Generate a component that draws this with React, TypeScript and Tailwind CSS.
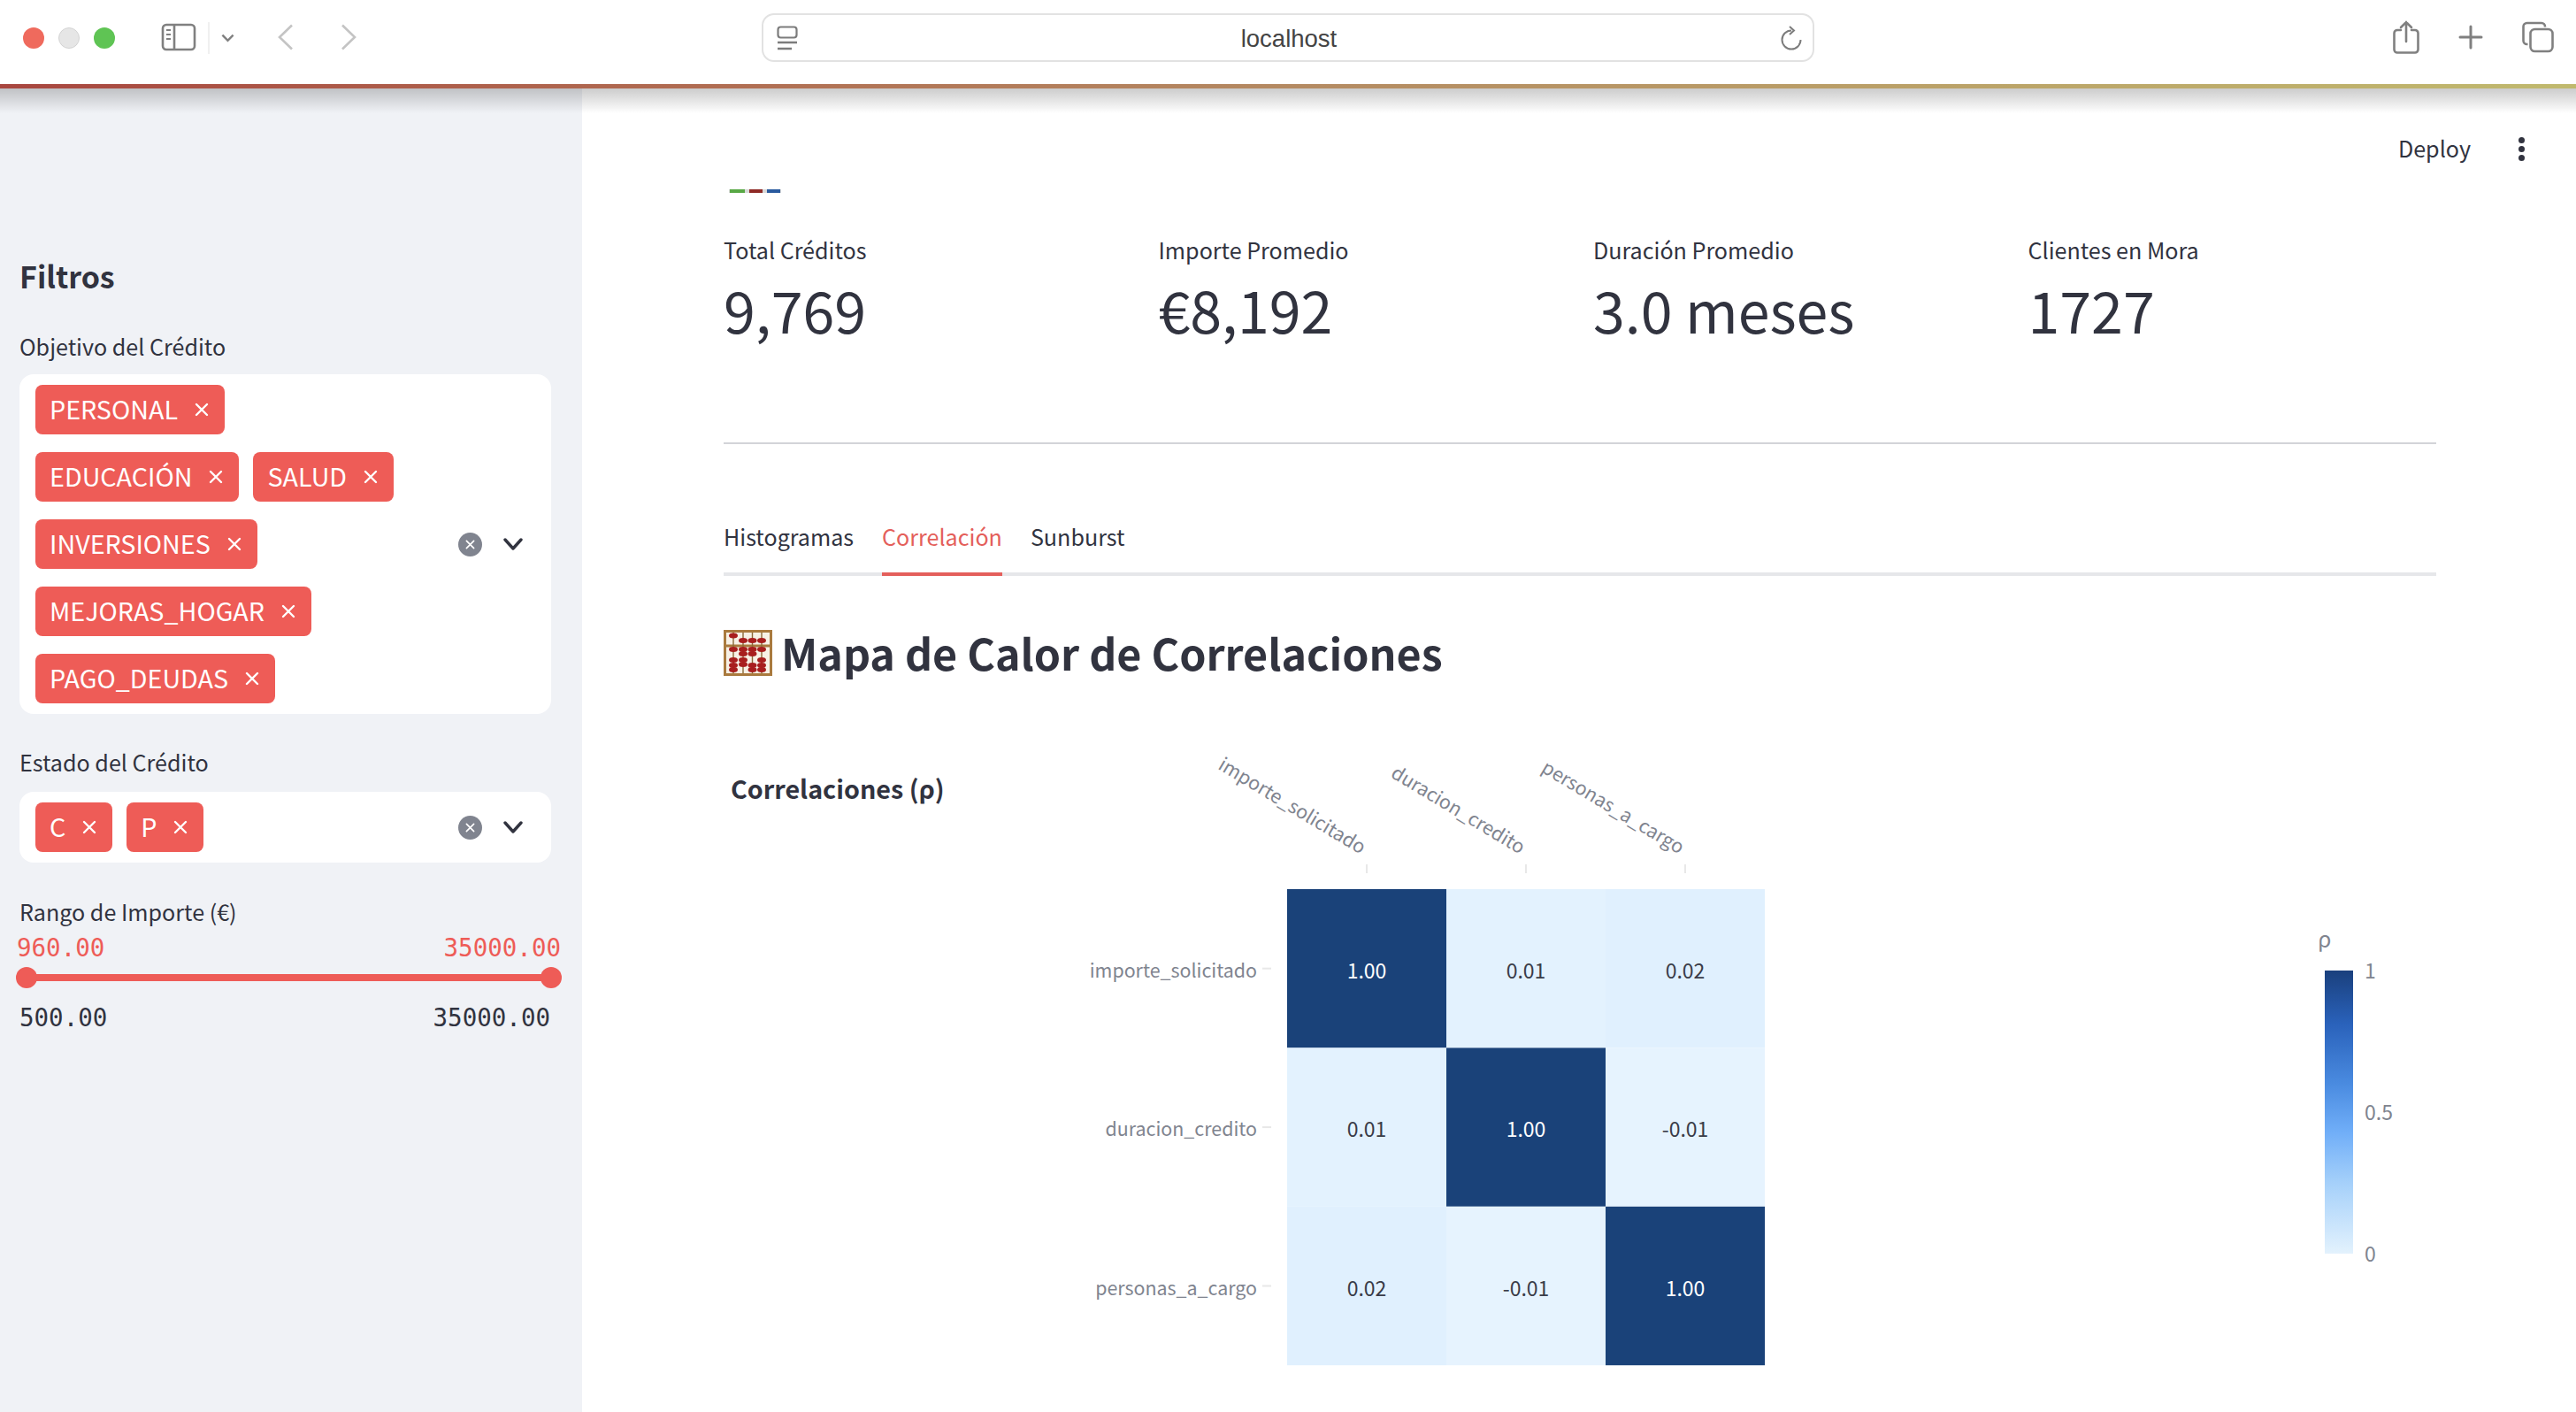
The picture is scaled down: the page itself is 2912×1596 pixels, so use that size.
import React from "react";

const SANS = "font-['Noto_Sans_CJK_SC','Noto_Sans',sans-serif]";

function XIcon({ className = "" }: { className?: string }) {
  return (
    <svg viewBox="0 0 16 16" className={className} fill="none" stroke="currentColor" strokeWidth="2.4" strokeLinecap="round">
      <path d="M2 2 L14 14 M14 2 L2 14" />
    </svg>
  );
}

function Tag({ label }: { label: string }) {
  return (
    <div className="flex h-[56px] items-center rounded-lg bg-[#ee5c57] pl-4 pr-[18px] text-[28.7px] leading-[54px] text-white">
      <span className="-mt-[2px]">{label}</span>
      <XIcon className="ml-[19px] h-4 w-4" />
    </div>
  );
}

function SelectControls() {
  return (
    <div className="flex shrink-0 items-center">
      <div className="flex h-[27px] w-[27px] items-center justify-center rounded-full bg-[#80848f] text-white">
        <XIcon className="h-[11px] w-[11px]" />
      </div>
      <svg viewBox="0 0 22 14" className="ml-[24px] h-[14px] w-[22px]" fill="none" stroke="#31333f" strokeWidth="3.4" strokeLinecap="round" strokeLinejoin="round">
        <path d="M2 2 L11 12 L20 2" />
      </svg>
    </div>
  );
}

function MultiSelect({ rows }: { rows: string[][] }) {
  return (
    <div className="mt-3 flex items-center justify-between rounded-2xl bg-white py-3 pl-[18px] pr-[32px]">
      <div className="flex flex-col gap-5">
        {rows.map((r) => (
          <div key={r[0]} className="flex gap-4">
            {r.map((t) => (
              <Tag key={t} label={t} />
            ))}
          </div>
        ))}
      </div>
      <SelectControls />
    </div>
  );
}

function Toolbar() {
  return (
    <div className="relative flex h-[95px] items-start bg-white">
      <div className="ml-[26px] mt-[31px] flex gap-4">
        <div className="h-6 w-6 rounded-full bg-[#ef6a5d]" />
        <div className="h-6 w-6 rounded-full border border-[#d4d4d4] bg-[#e6e6e6]" />
        <div className="h-6 w-6 rounded-full bg-[#5fc454]" />
      </div>
      <svg viewBox="0 0 40 32" className="ml-[52px] mt-[26px] h-8 w-10" fill="none" stroke="#808080" strokeWidth="2.6">
        <rect x="2" y="2" width="36" height="28" rx="4" />
        <path d="M15 2 V30" />
        <path d="M6 8 H11 M6 13 H11 M6 18 H11" strokeWidth="2" />
      </svg>
      <div className="ml-[13px] mt-[25px] h-[36px] w-[2px] bg-[#f0f0f0]" />
      <svg viewBox="0 0 16 10" className="ml-[13px] mt-[38px] h-[10px] w-[15px]" fill="none" stroke="#808080" strokeWidth="2.6">
        <path d="M1.5 1.5 L8 8 L14.5 1.5" />
      </svg>
      <svg viewBox="0 0 18 30" className="ml-[49px] mt-[27px] h-[30px] w-[18px]" fill="none" stroke="#c4c4c4" strokeWidth="2.6">
        <path d="M16 1.5 L2 15 L16 28.5" />
      </svg>
      <svg viewBox="0 0 18 30" className="ml-[53px] mt-[27px] h-[30px] w-[18px]" fill="none" stroke="#c4c4c4" strokeWidth="2.6">
        <path d="M2 1.5 L16 15 L2 28.5" />
      </svg>
      <div className="ml-[458px] mt-[15px] flex h-[55px] w-[1190px] items-center justify-between rounded-[14px] border-2 border-[#e2e2e2] pl-[15px] pr-[11px]">
        <svg viewBox="0 0 24 28" className="h-7 w-6" fill="none" stroke="#7c7c7c" strokeWidth="2.2">
          <rect x="1.5" y="1.5" width="21" height="12" rx="3" />
          <path d="M1 19 H23 M1 26 H17" strokeWidth="2.4" />
        </svg>
        <span className="mt-[2px] font-['Liberation_Sans',sans-serif] text-[27.5px] leading-none text-[#444]">localhost</span>
        <svg viewBox="0 0 26 28" className="h-7 w-[26px]" fill="none" stroke="#7c7c7c" strokeWidth="2">
          <path d="M13 5.5 A10.5 10.5 0 1 0 23.5 16" />
          <path d="M11 1 L16 5.5 L11 10" />
        </svg>
      </div>
      <svg viewBox="0 0 30 38" className="ml-auto mt-[23px] h-[38px] w-[30px]" fill="none" stroke="#808080" strokeWidth="2.6" strokeLinecap="round">
        <path d="M9 11 H5 a3.5 3.5 0 0 0 -3.5 3.5 V33 a3.5 3.5 0 0 0 3.5 3.5 H25 a3.5 3.5 0 0 0 3.5 -3.5 V14.5 a3.5 3.5 0 0 0 -3.5 -3.5 H21" />
        <path d="M15 24 V2 M9 8 L15 2 L21 8" />
      </svg>
      <svg viewBox="0 0 28 28" className="ml-[44px] mt-[28px] h-7 w-7" fill="none" stroke="#808080" strokeWidth="3" strokeLinecap="round">
        <path d="M14 2 V26 M2 14 H26" />
      </svg>
      <svg viewBox="0 0 36 36" className="ml-[44px] mr-[25px] mt-[24px] h-9 w-9" fill="none" stroke="#808080" strokeWidth="2.6">
        <rect x="9.5" y="9" width="25" height="25" rx="5" />
        <path d="M6.5 26 H5.5 A4 4 0 0 1 1.5 22 V6 A4 4 0 0 1 5.5 2 H22 A4 4 0 0 1 26 6 V6.5" />
      </svg>
    </div>
  );
}

function Sidebar() {
  return (
    <aside className="w-[658px] shrink-0 bg-[#f0f2f6] pl-[22px] pr-[35px] pt-[190px]">
      <h2 className="text-[34px] font-semibold leading-[44px]">Filtros</h2>
      <div className="mt-[37px] text-[25.1px] leading-[40px]">Objetivo del Crédito</div>
      <MultiSelect
        rows={[
          ["PERSONAL"],
          ["EDUCACIÓN", "SALUD"],
          ["INVERSIONES"],
          ["MEJORAS_HOGAR"],
          ["PAGO_DEUDAS"],
        ]}
      />
      <div className="mt-[34px] text-[25.1px] leading-[40px]">Estado del Crédito</div>
      <div className="pt-[2px]">
        <MultiSelect rows={[["C", "P"]]} />
      </div>
      <div className="mt-[35px] text-[25.1px] leading-[40px]">Rango de Importe (€)</div>
      <div className="-ml-[3px] -mr-[11px] mt-[3px] flex justify-between font-['DejaVu_Sans_Mono',monospace] text-[27.5px] leading-[36px] text-[#ee5c57]">
        <span>960.00</span>
        <span>35000.00</span>
      </div>
      <div className="relative ml-2 mt-3 h-2 rounded-full bg-[#ee5c57]">
        <div className="absolute -left-[12px] -top-2 h-6 w-6 rounded-full bg-[#ee5c57]" />
        <div className="absolute -right-[12px] -top-2 h-6 w-6 rounded-full bg-[#ee5c57]" />
      </div>
      <div className="mt-[23px] flex justify-between pr-[1px] font-['DejaVu_Sans_Mono',monospace] text-[27.5px] leading-[36px]">
        <span>500.00</span>
        <span>35000.00</span>
      </div>
    </aside>
  );
}

function Metric({ label, value }: { label: string; value: string }) {
  return (
    <div>
      <div className="text-[25.1px] leading-[40px]">{label}</div>
      <div className="mt-[2px] text-[64.5px] leading-[90px]">{value}</div>
    </div>
  );
}

function Abacus() {
  const rods = [
    { x: 11, top: 6.5, lows: [22, 34, 40, 45] },
    { x: 22, top: 12, lows: [22, 27, 34, 39] },
    { x: 32.5, top: 12, lows: [22, 27, 40, 45] },
    { x: 43, top: 12, lows: [22, 34, 40, 45] },
  ];
  return (
    <svg viewBox="0 0 55 52" className="mb-1 mr-[10px] h-[52px] w-[55px] shrink-0">
      <rect x="0" y="0" width="55" height="52" fill="#a97a3e" />
      <rect x="3" y="3" width="49" height="46" fill="#f7f1e6" />
      <rect x="0" y="16.5" width="55" height="3" fill="#a97a3e" />
      {rods.map((r) => (
        <g key={r.x}>
          <rect x={r.x - 0.7} y="3" width="1.4" height="46" fill="#8a6a3a" />
          <ellipse cx={r.x} cy={r.top} rx="5" ry="2.9" fill="#a81e1e" />
          {r.lows.map((y) => (
            <ellipse key={y} cx={r.x} cy={y} rx="5" ry="2.9" fill="#a81e1e" />
          ))}
        </g>
      ))}
    </svg>
  );
}

const LABELS = ["importe_solicitado", "duracion_credito", "personas_a_cargo"];
const VALUES = [
  ["1.00", "0.01", "0.02"],
  ["0.01", "1.00", "-0.01"],
  ["0.02", "-0.01", "1.00"],
];
const CELL_FILL: Record<string, string> = {
  "1.00": "#1a4279",
  "0.01": "#e3f2fe",
  "0.02": "#e0f0fe",
  "-0.01": "#e6f3fe",
};
const FONT = "'Noto Sans CJK SC','Noto Sans',sans-serif";

function Heatmap() {
  const X0 = 1455;
  const Y0 = 1005;
  const W = 180;
  const H = 179.4;
  return (
    <svg viewBox="818 830 1936 766" className="mt-[55px] block h-[766px] w-[1936px] shrink-0" fontFamily={FONT}>
      <defs>
        <linearGradient id="cb" x1="0" y1="0" x2="0" y2="1">
          <stop offset="0" stopColor="#1a407d" />
          <stop offset="0.19" stopColor="#2a62bb" />
          <stop offset="0.4" stopColor="#4a8be0" />
          <stop offset="0.57" stopColor="#70aef8" />
          <stop offset="0.75" stopColor="#a5d0fa" />
          <stop offset="1" stopColor="#e3f2fd" />
        </linearGradient>
      </defs>
      <text x="826" y="903" fontSize="28.7" fontWeight="700" fill="#31333f">Correlaciones (ρ)</text>
      {LABELS.map((l, i) => (
        <g key={l}>
          <text x={X0 - 34} y={Y0 + H * i + H / 2 + 10} textAnchor="end" fontSize="21.4" fill="#80848f">{l}</text>
          <rect x="1427" y={Y0 + H * i + H / 2 - 1} width="10" height="2" fill="#e8e8e8" />
          <rect x={X0 + W * i + W / 2 - 1} y="977" width="2" height="10" fill="#e8e8e8" />
          <text transform={`translate(${X0 + W * i + W / 2 - 7} 966) rotate(31)`} textAnchor="end" fontSize="21.4" fill="#80848f">{l}</text>
        </g>
      ))}
      {VALUES.map((row, r) =>
        row.map((v, c) => (
          <g key={`${r}-${c}`}>
            <rect x={X0 + W * c} y={Y0 + H * r} width={W} height={H} fill={CELL_FILL[v]} />
            <text x={X0 + W * c + W / 2} y={Y0 + H * r + H / 2 + 11} textAnchor="middle" fontSize="23" fill={v === "1.00" ? "#ffffff" : "#3a3c48"}>{v}</text>
          </g>
        ))
      )}
      <text x="2620" y="1071" fontSize="25" fill="#80848f">ρ</text>
      <rect x="2628" y="1097" width="32" height="320" fill="url(#cb)" />
      <text x="2673" y="1106" fontSize="23" fill="#80848f">1</text>
      <text x="2673" y="1266" fontSize="23" fill="#80848f">0.5</text>
      <text x="2673" y="1426" fontSize="23" fill="#80848f">0</text>
    </svg>
  );
}

function Main() {
  return (
    <main className="min-w-0 flex-1">
      <div className="flex items-center justify-end pr-[58px] pt-[49px]">
        <span className="-mt-[2px] text-[25.1px] leading-[40px]">Deploy</span>
        <div className="ml-[54px] flex flex-col gap-[3px]">
          <div className="h-[7px] w-[7px] rounded-full bg-[#31333f]" />
          <div className="h-[7px] w-[7px] rounded-full bg-[#31333f]" />
          <div className="h-[7px] w-[7px] rounded-full bg-[#31333f]" />
        </div>
      </div>
      <div className="pl-[160px] pr-[158px]">
        <div className="ml-[6px] mt-[27px] flex h-1 w-[59px] bg-[#d8d8d8]">
          <div className="ml-[1px] h-full w-[17px] bg-[#58a845]" />
          <div className="ml-[5px] h-full w-[15px] bg-[#8e2a26]" />
          <div className="ml-[5px] h-full w-[15px] bg-[#2a5a9e]" />
        </div>
        <div className="mb-[2px] mt-[44px] grid grid-cols-4 gap-[30px]">
          <Metric label="Total Créditos" value="9,769" />
          <Metric label="Importe Promedio" value="€8,192" />
          <Metric label="Duración Promedio" value="3.0 meses" />
          <Metric label="Clientes en Mora" value="1727" />
        </div>
        <div className="mt-[106px] h-[2px] bg-[#d3d4d8]" />
        <div className="mt-[84px] flex gap-[32px] border-b-4 border-[#e6e7ea] text-[25.1px] leading-[40px]">
          <div className="-mb-1 border-b-4 border-transparent pb-[21px]">Histogramas</div>
          <div className="-mb-1 border-b-4 border-[#e45f5b] pb-[21px] text-[#e45f5b]">Correlación</div>
          <div className="-mb-1 border-b-4 border-transparent pb-[21px]">Sunburst</div>
        </div>
        <div className="mt-[54px] flex h-[70px] items-center">
          <Abacus />
          <h1 className="mb-[7px] text-[48.4px] font-semibold leading-[70px]">Mapa de Calor de Correlaciones</h1>
        </div>
        <Heatmap />
      </div>
    </main>
  );
}

export default function App() {
  return (
    <div className={`${SANS} flex h-[1596px] w-[2912px] flex-col overflow-hidden bg-white text-[#31333f]`}>
      <Toolbar />
      <div className="h-[5px] shrink-0 bg-gradient-to-r from-[#a8463f] via-[#b48a62] to-[#c0b96e]" />
      <div className="relative flex min-h-0 flex-1">
        <Sidebar />
        <Main />
        <div className="pointer-events-none absolute inset-x-0 top-0 h-[28px] bg-gradient-to-b from-black/20 to-transparent" />
      </div>
    </div>
  );
}
